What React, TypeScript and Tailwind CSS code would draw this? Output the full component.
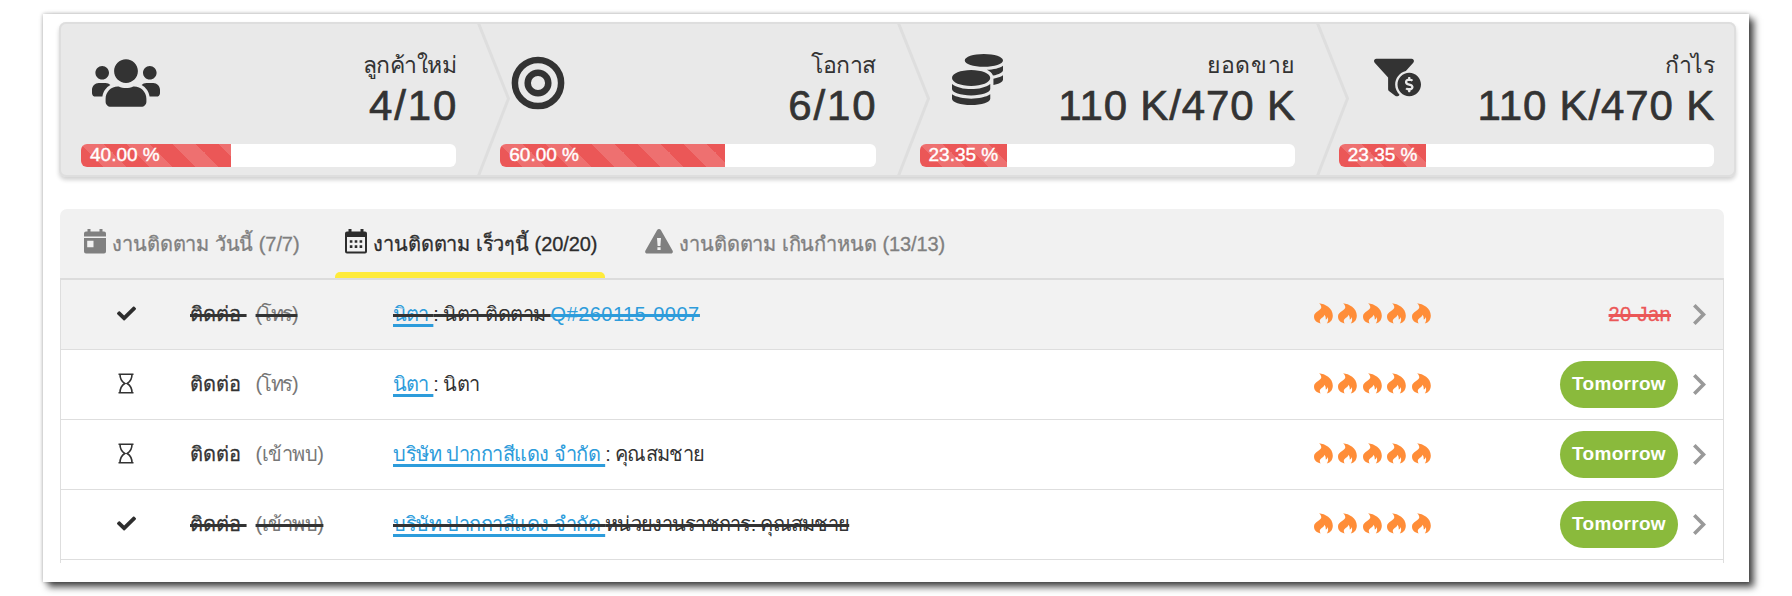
import { FaUsers, FaCoins, FaFunnelDollar, FaCheck } from "react-icons/fa";

const Target = () => (
  <svg viewBox="0 0 54 54" className="h-[54px] w-[54px]" fill="none" stroke="currentColor" strokeWidth="6.5">
    <circle cx="27" cy="27" r="23.1" />
    <circle cx="27" cy="27" r="10.3" />
  </svg>
);

const CalendarDay = () => (
  <svg viewBox="0 0 22 25" className="h-[25px] w-[22px] shrink-0" fill="currentColor">
    <path d="M3.500 0h3v2.500h9V0h3v2.500H20a2 2 0 0 1 2 2v3H0v-3a2 2 0 0 1 2-2h1.500zM0 9h22v13.500a2 2 0 0 1-2 2H2a2 2 0 0 1-2-2zM3.200 11.800v6.500h6.300v-6.500z" fillRule="evenodd" />
  </svg>
);

const CalendarDots = () => (
  <svg viewBox="0 0 22 25" className="h-[25px] w-[22px] shrink-0" fill="currentColor">
    <path d="M3.500 0h3v2.500h9V0h3v2.500H20a2 2 0 0 1 2 2v18a2 2 0 0 1-2 2H2a2 2 0 0 1-2-2v-18a2 2 0 0 1 2-2h1.500zM2 8v14.500h18V8z" fillRule="evenodd" />
    <path d="M4.800 11.200h2.600v2.600H4.800zM9.700 11.200h2.600v2.600H9.700zM14.600 11.200h2.600v2.600h-2.600zM4.800 16.300h2.600v2.600H4.800zM9.700 16.300h2.600v2.600H9.700zM14.600 16.300h2.600v2.600h-2.600z" />
  </svg>
);

const Warning = () => (
  <svg viewBox="0 0 28 25" className="h-[25px] w-[28px] shrink-0" fill="currentColor">
    <path d="M12 1.200c.9-1.600 3.100-1.600 4 0l11.500 20.300c.9 1.500 0 3-1.600 3H2.100C.5 24.500-.4 23 .5 21.500zM12 9l.6 8h2.800l.6-8zM12.400 18.300v2.800h3.200v-2.800z" fillRule="evenodd" />
  </svg>
);

const Hourglass = () => (
  <svg viewBox="0 0 16 21" className="h-[21px] w-[16px]" fill="none" stroke="currentColor" strokeWidth="1.6">
    <path d="M.5 1.200h15M.5 19.800h15M2 1.200c0 5 1.500 7.300 4.800 9.300C3.500 12.500 2 14.800 2 19.800M14 1.200c0 5-1.500 7.300-4.800 9.300 3.300 2 4.800 4.300 4.800 9.300" />
  </svg>
);

const Flame = () => (
  <svg viewBox="0 0 19 21" className="h-[21px] w-[19px]" fill="currentColor">
    <path d="M5 .2C11 .8 18.800 5 18.800 12.500c0 4-2 7-6 8 1.400-1.800 1.700-4.300.9-6.500-.3 1.500-1 2.200-2 2.500.2-2-.2-3.600-1.300-4.800-.2 2.800-4.600 3.300-4.600 6.300 0 1 .3 1.800.8 2.500C3 19.800 0 17.500 0 13.600 0 8.500 7.500 7.500 7.300 4.300 7.300 2.800 6.300 1.200 5 .2z" />
  </svg>
);

const Arrow = () => (
  <svg viewBox="0 0 13 21" className="h-[21px] w-[13px]" fill="none" stroke="currentColor" strokeWidth="3.600">
    <path d="M1.300 1.300l9.200 9.200-9.200 9.200" />
  </svg>
);

const kpis = [
  { label: "ลูกค้าใหม่", value: "4/10", pct: 40, icon: <FaUsers className="h-[68px] w-[68px]" />, pos: "left-[33px] top-[27px]", lt: "tracking-[-0.5px]", vt: "tracking-[1.9px] -mr-[2px]" },
  { label: "โอกาส", value: "6/10", pct: 60, icon: <Target />, pos: "left-[33px] top-[34px]", lt: "tracking-[-0.5px]", vt: "tracking-[1.9px] -mr-[2px]" },
  { label: "ยอดขาย", value: "110 K/470 K", pct: 23.35, icon: <FaCoins className="h-[51px] w-[51px]" />, pos: "left-[54px] top-[32px]", lt: "tracking-[0.6px]", vt: "tracking-[0.85px] -mr-[1px]" },
  { label: "กำไร", value: "110 K/470 K", pct: 23.35, icon: <FaFunnelDollar className="h-[47px] w-[47px]" />, pos: "left-[57px] top-[32px]", lt: "tracking-[-0.6px]", vt: "tracking-[0.85px] -mr-[1px]" },
];

const tabs = [
  { label: "งานติดตาม วันนี้ (7/7)", icon: <CalendarDay />, on: false, box: "ml-[24px] w-[214px]" },
  { label: "งานติดตาม เร็วๆนี้ (20/20)", icon: <CalendarDots />, on: true, box: "ml-[37px] w-[270px] pl-[10px]" },
  { label: "งานติดตาม เกินกำหนด (13/13)", icon: <Warning />, on: false, box: "ml-[40px] w-[300px]" },
];

const rows = [
  { done: true, kind: "(โทร)", kt: "tracking-[-1.3px]", link: "นิตา ", at: "tracking-[-0.8px]", rest: ": นิตา ติดตาม ", rt: "tracking-[-0.5px]", quote: "Q#260115-0007", date: "20 Jan" },
  { done: false, kind: "(โทร)", kt: "tracking-[-1.3px]", link: "นิตา ", at: "tracking-[-0.8px]", rest: ": นิตา", rt: "tracking-[-0.5px]", date: "Tomorrow" },
  { done: false, kind: "(เข้าพบ)", kt: "tracking-[-0.5px]", link: "บริษัท ปากกาสีแดง จำกัด ", at: "tracking-[-0.5px]", rest: ": คุณสมชาย", rt: "tracking-[-0.65px]", date: "Tomorrow" },
  { done: true, kind: "(เข้าพบ)", kt: "tracking-[-0.5px]", link: "บริษัท ปากกาสีแดง จำกัด ", at: "tracking-[-0.5px]", rest: "หน่วยงานราชการ: คุณสมชาย", rt: "tracking-[-0.73px]", date: "Tomorrow" },
];

export default function App() {
  return (
    <div className="h-[596px] w-[1792px] overflow-hidden bg-white pl-[43px] pt-[14px] font-['Liberation_Sans','Noto_Sans',sans-serif] text-[#333]">
      <div className="h-[568px] w-[1706px] bg-white pl-4 pt-2 shadow-[0_0_4px_rgba(0,0,0,0.3),5px_5px_7px_rgba(0,0,0,0.7)]">
        <div className="flex h-[155px] w-[1677px] rounded-[7px] bg-[#e9e9e9] shadow-[0_3px_4px_rgba(0,0,0,0.18)] outline-2 -outline-offset-2 outline-[#dedede]">
          {kpis.map((k, i) => (
            <div key={k.label} className="relative h-full flex-1 px-[22px]">
              {i > 0 && (
                <svg viewBox="0 0 34 155" className="absolute -left-[1px] top-0 h-[155px] w-[34px]" fill="none" stroke="#dedede" strokeWidth="3">
                  <path d="M1 0l30.500 76.500L1 155" />
                </svg>
              )}
              <div className={`absolute ${k.pos}`}>{k.icon}</div>
              <div className="flex h-[122px] flex-col items-end pt-[27px]">
                <div className={`text-[23px] leading-[33px] whitespace-nowrap ${k.lt}`}>{k.label}</div>
                <div className={`text-[42px] leading-[48px] whitespace-nowrap [-webkit-text-stroke:0.7px_#333] ${k.vt}`}>{k.value}</div>
              </div>
              <div className="h-[23px] overflow-hidden rounded-[6px] bg-white">
                <div
                  className="h-full bg-[#eb5757] bg-[linear-gradient(45deg,rgba(255,255,255,0.15)_25%,transparent_25%,transparent_50%,rgba(255,255,255,0.15)_50%,rgba(255,255,255,0.15)_75%,transparent_75%)] bg-[length:46px_46px] pl-[9px] text-[19px] leading-[22px] whitespace-nowrap text-white [-webkit-text-stroke:0.4px_white]"
                  style={{ width: `${k.pct}%` }}
                >
                  {k.pct.toFixed(2)} %
                </div>
              </div>
            </div>
          ))}
        </div>

        <div className="mt-[32px] ml-[1px] w-[1664px]">
          <div className="flex h-[71px] rounded-t-[7px] border-b-2 border-[#dcdcdc] bg-[#f1f1f1]">
            {tabs.map((t) => (
              <div key={t.label} className={`relative flex items-start gap-[6px] pt-[20px] ${t.box} ${t.on ? "text-[#2d2d2d]" : "text-[#808080]"}`}>
                {t.icon}
                <span className="pt-[1px] text-[20px] leading-[28px] tracking-[-0.1px] whitespace-nowrap [-webkit-text-stroke:0.3px]">{t.label}</span>
                {t.on && <div className="absolute bottom-0 left-0 h-[6px] w-full rounded-t-[5px] bg-[#ffeb3b]" />}
              </div>
            ))}
          </div>
          <div className="h-[283px] border-x border-[#dedede]">
            {rows.map((r, i) => (
              <div key={i} className={`flex h-[70px] items-center border-b border-[#dedede] text-[20px] ${i === 0 ? "bg-[#f2f2f2]" : ""}`}>
                <div className="flex w-[129px] justify-center pb-[3px] pl-[1px]">
                  {r.done ? <FaCheck className="h-[19px] w-[19px] text-[#2d2d2d]" /> : <Hourglass />}
                </div>
                <div className={`w-[203px] pb-[2px] whitespace-pre ${r.done ? "line-through decoration-[2.5px]" : ""}`}>
                  <span className="[-webkit-text-stroke:0.3px]">ติดต่อ </span>
                  <span className={`ml-[9px] text-[#777] ${r.kt}`}>{r.kind}</span>
                </div>
                <div className={`flex-1 pb-[2px] whitespace-pre ${r.done ? "line-through decoration-[2.5px]" : ""}`}>
                  <span className={`text-[#2d9cdb] underline decoration-[2.5px] underline-offset-[3px] ${r.at}`}>{r.link}</span>
                  <span className={r.rt}>{r.rest}</span>
                  {r.quote && <span className="tracking-[0.45px] text-[#2d9cdb] line-through decoration-[2.5px]">{r.quote}</span>}
                </div>
                <div className="flex w-[246px] gap-[5.400px] pb-[3px] text-[#ff8d38]">
                  {[0, 1, 2, 3, 4].map((n) => <Flame key={n} />)}
                </div>
                <div className="flex w-[118px] justify-end">
                  {i === 0 ? (
                    <span className="mr-[7px] pb-[2px] tracking-[0.4px] text-[#eb5757] line-through decoration-[2.5px] [-webkit-text-stroke:0.3px]">{r.date}</span>
                  ) : (
                    <span className="h-[47px] w-[118px] rounded-full bg-[#8aba3c] text-center text-[19px] leading-[46px] font-bold tracking-[0.3px] text-white">{r.date}</span>
                  )}
                </div>
                <div className="mr-[17px] ml-[15px] pb-[1px] text-[#999]"><Arrow /></div>
              </div>
            ))}
          </div>
        </div>
      </div>
    </div>
  );
}
